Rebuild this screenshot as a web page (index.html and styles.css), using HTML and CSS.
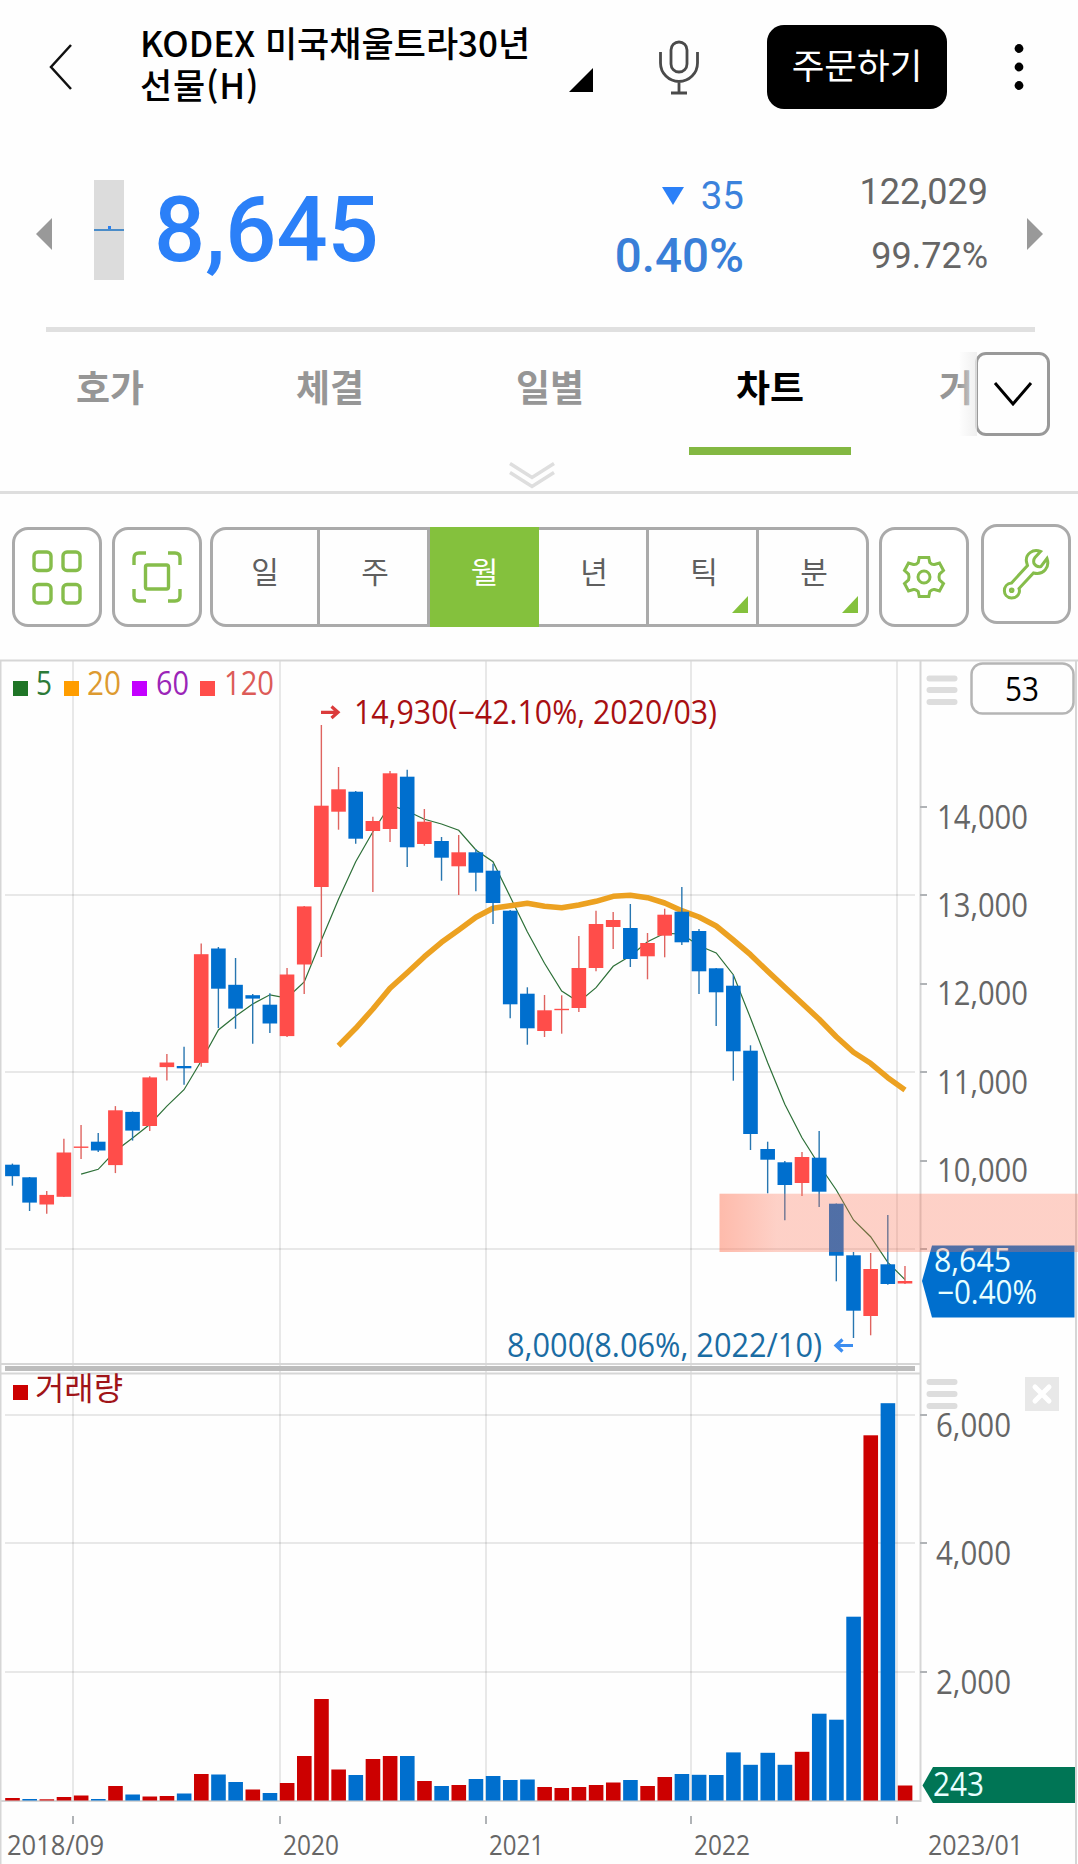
FILE: index.html
```html
<!DOCTYPE html>
<html lang="ko">
<head>
<meta charset="utf-8">
<title>KODEX 미국채울트라30년선물(H)</title>
<link rel="stylesheet" href="styles.css">
</head>
<body>
<header class="topbar">
  <svg class="back" width="24" height="48" viewBox="0 0 24 48"><path d="M22 2 2 24 22 46"/></svg>
  <h1 class="title">KODEX 미국채울트라30년<br><span class="second">선물(H)</span></h1>
  <svg class="picker" width="24" height="24" viewBox="0 0 24 24"><path d="M24 0V24H0Z"/></svg>
  <svg class="mic" width="42" height="56" viewBox="0 0 42 56"><rect x="13" y="2" width="16" height="30" rx="8"/><path d="M2.500 12V23a18.500 18.500 0 0 0 37 0V12M21 42V53M13 53H29"/></svg>
  <button class="order">주문하기</button>
  <svg class="more" width="10" height="48" viewBox="0 0 10 48"><circle cx="5" cy="5.500" r="4.400"/><circle cx="5" cy="24" r="4.400"/><circle cx="5" cy="42.500" r="4.400"/></svg>
</header>

<section class="quote">
  <svg class="prev" width="16" height="32" viewBox="0 0 16 32"><path d="M16 0V32L0 16Z"/></svg>
  <div class="range"><i></i></div>
  <div class="price">8,645</div>
  <div class="change">
    <div class="diff"><svg width="22" height="18" viewBox="0 0 22 18"><path d="M0 0H22L11 18Z"/></svg><span>35</span></div>
    <div class="rate">0.40%</div>
  </div>
  <div class="volume"><div>122,029</div><div>99.72%</div></div>
  <svg class="next" width="16" height="32" viewBox="0 0 16 32"><path d="M0 0V32L16 16Z"/></svg>
</section>

<nav class="tabs">
  <a>호가</a><a>체결</a><a>일별</a><a class="on">차트</a><a class="cut">거</a>
  <button class="expand"><svg width="40" height="26" viewBox="0 0 40 26"><path d="M2 2 20 23 38 2"/></svg></button>
</nav>
<div class="pull"><svg width="46" height="27" viewBox="0 0 46 27"><path d="M1 1.500 23 15.500 45 1.500M1 10.500 23 24.500 45 10.500"/></svg></div>

<section class="tools">
  <button class="tool"><svg width="50" height="55" viewBox="0 0 50 55"><rect x="2" y="2" width="17" height="18.500" rx="4"/><rect x="31" y="2" width="17" height="18.500" rx="4"/><rect x="2" y="34.500" width="17" height="18.500" rx="4"/><rect x="31" y="34.500" width="17" height="18.500" rx="4"/></svg></button>
  <button class="tool focus"><svg width="50" height="52" viewBox="0 0 50 52"><path d="M2 14V7Q2 2 7 2H14M36 2H43Q48 2 48 7V14M48 38V45Q48 50 43 50H36M14 50H7Q2 50 2 45V38"/><rect x="13.500" y="14" width="23" height="24" rx="2"/></svg></button>
  <div class="periods">
    <button>일</button><button>주</button><button class="on">월</button><button>년</button><button class="sub">틱</button><button class="sub">분</button>
  </div>
  <button class="tool gear"><svg width="44" height="44" viewBox="-22 -22 44 44"><path d="M-4.800 -19.500H4.800L5.800 -14.500Q8 -12 10.500 -12.500L15.500 -14 19.500 -6.500 15.500 -3Q14.500 0 15.500 3L19.500 6.500 15.500 14 10.500 12.500Q8 12 5.800 14.500L4.800 19.500H-4.800L-5.800 14.500Q-8 12-10.500 12.500L-15.500 14-19.500 6.500-15.500 3Q-14.500 0-15.500 -3L-19.500 -6.500-15.500 -14-10.500 -12.500Q-8 -12-5.800 -14.500Z"/><circle r="6"/></svg></button>
  <button class="tool wrench"><svg width="48" height="54" viewBox="0 0 48 54"><path d="M38.500 4.500C31 1.500 23 7 24.500 15L25.500 18.500 9.500 36C0 37 0 50.500 9.500 51 16 51 18.500 45.500 17 41.500L31.500 26C41.500 28.500 48 20.500 45 11.500L39 19.500Q34.500 20.500 32 16.500 31 13 33 10.500Z"/><circle cx="9.700" cy="43.300" r="1.300"/></svg></button>
</section>

<svg class="chart" id="chart" width="1078" height="1209" viewBox="0 655 1078 1209">
  <defs>
    <linearGradient id="zone"><stop offset="0" stop-color="#ff7859" stop-opacity=".5"/><stop offset=".16" stop-color="#fc7052" stop-opacity=".32"/><stop offset="1" stop-color="#fc7052" stop-opacity=".32"/></linearGradient>
  </defs>
  <g class="grid">
    <path d="M73 661V1801M280 661V1801M486 661V1801M691 661V1801M897 661V1801"/>
    <path d="M5 895H915M5 1072H915M5 1249H915M5 1415H915M5 1543H915M5 1672H915"/>
  </g>
  <g class="frame">
    <path d="M0 660.500H1078M0.500 660V1864M0 1364H920M0 1373.500H920"/>
    <path d="M920.500 660V1802M1076 660V1864M0 1801H920"/>
  </g>
  <path class="splitter" d="M5 1368.500H915"/>
  <path class="ticks" d="M920 807H927M920 895H927M920 984H927M920 1072H927M920 1161H927M920 1249H927M920 1415H927M920 1543H927M920 1672H927M73 1816V1824M280 1816V1824M486 1816V1824M691 1816V1824M897 1816V1824"/>
  <path id="ma5" class="ma5"/>
  <path id="ma20" class="ma20"/>
  <g id="candles"></g>
  <g id="volumes"></g>

  <g class="legend">
    <rect x="13" y="681" width="15" height="15" fill="#1f7526"/><text x="36" y="695" textLength="16" fill="#2c7a38">5</text>
    <rect x="64" y="681" width="15" height="15" fill="#ff9d00"/><text x="87" y="695" textLength="34" fill="#dd9a30">20</text>
    <rect x="132" y="681" width="15" height="15" fill="#c300ff"/><text x="156" y="695" textLength="33" fill="#9b25b8">60</text>
    <rect x="200" y="681" width="15" height="15" fill="#ff4d4a"/><text x="224" y="695" textLength="50" fill="#dc5b58">120</text>
    <rect x="13" y="1385" width="15" height="15" fill="#c00"/><text class="ko" x="35" y="1400" textLength="88" fill="#a01418">거래량</text>
  </g>
  <path class="arrow" stroke="#db3b3b" d="M321 712.300H338M331.500 706.500 338 712.300 331.500 718"/>
  <text x="354" y="724" textLength="363" fill="#a80f12">14,930(−42.10%, 2020/03)</text>
  <path class="arrow" stroke="#3b8df0" d="M853 1345.500H836M842.500 1339.500 836 1345.500 842.500 1351.500"/>
  <text x="507" y="1356.500" textLength="315" fill="#1a6ca3">8,000(8.06%, 2022/10)</text>

  <g class="axis">
    <text x="937" y="828.500" textLength="91">14,000</text>
    <text x="937" y="916.500" textLength="91">13,000</text>
    <text x="937" y="1005" textLength="91">12,000</text>
    <text x="937" y="1093.500" textLength="91">11,000</text>
    <text x="937" y="1182" textLength="91">10,000</text>
    <text x="936" y="1436.500" textLength="75">6,000</text>
    <text x="936" y="1564.500" textLength="75">4,000</text>
    <text x="936" y="1693.500" textLength="75">2,000</text>
  </g>
  <g class="axis dates">
    <text x="7" y="1855" textLength="97">2018/09</text>
    <text x="283" y="1855" textLength="56">2020</text>
    <text x="489" y="1855" textLength="55">2021</text>
    <text x="694" y="1855" textLength="56">2022</text>
    <text x="928" y="1855" textLength="95">2023/01</text>
  </g>
  <path class="menu" d="M929.500 678.500H954.500M929.500 690H954.500M929.500 702H954.500M929.500 1382H954.500M929.500 1394H954.500M929.500 1406H954.500"/>
  <rect class="count" x="971.500" y="663.500" width="102" height="50" rx="11"/>
  <text x="1005" y="700.500" textLength="34" fill="#000">53</text>
  <rect x="1025" y="1377" width="34" height="34" fill="#e8e8e8"/>
  <path class="close" d="M1035 1387 1049 1401M1049 1387 1035 1401"/>

  <path d="M922 1281 932 1245.500H1074.500V1317.500H932Z" fill="#006fce"/>
  <text class="tag" x="934" y="1272" textLength="77">8,645</text>
  <text class="tag" x="937" y="1303.500" textLength="100">−0.40%</text>
  <path d="M922.500 1785.500 933 1767H1075V1803H933Z" fill="#007555"/>
  <text class="tag" x="933" y="1796" textLength="51">243</text>
  <rect x="719.500" y="1193.700" width="358.500" height="58.300" fill="url(#zone)"/>
</svg>
<script src="chart.js"></script>
</body>
</html>
```
FILE: styles.css
```css
* { box-sizing: border-box; }
body {
  margin: 0;
  width: 1078px;
  height: 1864px;
  overflow: hidden;
  background: #fefefe;
  font-family: Roboto, "Noto Sans CJK KR", sans-serif;
  color: #000;
}
button { padding: 0; border: 0; background: none; font: inherit; color: inherit; }
svg { display: block; flex: none; }

.topbar { display: flex; height: 134px; padding-left: 49px; }
.back { margin-top: 43px; fill: none; stroke: #111; stroke-width: 2.5; }
.title {
  width: 420px;
  margin: 21px 0 0 67px;
  font: 500 35px/42px "Noto Sans CJK KR", sans-serif;
  white-space: nowrap;
}
.second { letter-spacing: .8px; }
.picker { margin: 68px 0 0 9px; }
.mic { margin: 40px 0 0 65px; fill: none; stroke: #4a4a4a; stroke-width: 2.8; }
.order {
  width: 180px;
  height: 84px;
  margin: 25px 0 0 67px;
  padding-bottom: 8px;
  border-radius: 17px;
  background: #000;
  color: #fff;
  font: 400 35.5px "Noto Sans CJK KR", sans-serif;
}
.more { margin: 43px 0 0 67px; }

.quote {
  display: flex;
  height: 198px;
  margin: 0 43px 0 46px;
  border-bottom: 5px solid #e0e0e0;
  font-size: 36px;
  color: #666;
}
.quote > * { flex: none; }
.prev, .next { margin-top: 84px; fill: #999; }
.prev { margin-left: -10px; }
.range { width: 30px; height: 100px; margin: 46px 0 0 42px; padding-top: 46px; background: #dcdcdc; }
.range i { display: block; height: 5px; border-bottom: 2px solid #4b8cc8; background: linear-gradient(#2b80f0, #2b80f0) 50% 0 / 3px 5px no-repeat; }
.price { width: 300px; margin: 42px 0 0 30px; font-size: 90px; line-height: 110px; font-weight: 500; color: #2b80f8; }
.change { width: 290px; margin-top: 39px; text-align: right; color: #397fd8; }
.diff { display: flex; justify-content: flex-end; align-items: center; gap: 17px; font-size: 38.5px; line-height: 46px; color: #3b82dc; }
.diff svg { fill: #2b80f8; }
.rate { margin-top: 9px; font-size: 47.5px; line-height: 56px; font-weight: 500; }
.volume { width: 244px; margin-top: 36px; text-align: right; line-height: 44px; }
.volume div + div { margin-top: 20px; }
.next { margin-left: 39px; }

.tabs { display: flex; position: relative; height: 123px; font: 700 37px/55px "Noto Sans CJK KR", sans-serif; color: #969696; }
.tabs a { width: 220px; height: 123px; padding-top: 27px; text-align: center; }
.tabs .on { padding-inline: 29px; color: #000; background: linear-gradient(#83b842, #83b842) 50% 115px / 162px 8px no-repeat; }
.tabs .cut { width: 95px; padding-left: 59px; text-align: left; }
.expand {
  position: absolute;
  left: 975px;
  top: 20px;
  display: grid;
  place-items: center;
  width: 75px;
  height: 84px;
  border: 3px solid #999;
  border-radius: 11px;
  background: #fefefe;
}
.expand::before { content: ""; position: absolute; right: 70px; top: -3px; width: 18px; height: 84px; background: linear-gradient(90deg, #fff0, #ecececcc); }
.expand svg { fill: none; stroke: #000; stroke-width: 3; }

.pull { display: flex; justify-content: center; height: 39px; padding: 7px 14px 0 0; border-bottom: 3px solid #dedede; }
.pull svg { fill: none; stroke: #dedede; stroke-width: 3.5; }

.tools { display: flex; align-items: flex-start; height: 161px; padding: 33px 0 0 12px; }
.tool {
  display: grid;
  place-items: center;
  width: 90px;
  height: 100px;
  border: 3px solid #aaa;
  border-radius: 16px;
  background: #fff;
}
.tool svg { fill: none; stroke: #86bd4b; stroke-width: 3.4; }
.focus { margin-left: 10px; }
.gear { margin-left: 10px; }
.wrench { margin: -3px 0 0 12px; }
.tool.wrench svg, .tool.gear svg { stroke-width: 3; }
.periods { display: grid; grid-template-columns: 107px 110px 109px 110px 110px 1fr; width: 659px; height: 100px; margin-left: 8px; border: 3px solid #aaa; border-radius: 16px; }
.periods button { position: relative; padding: 0 0 14px 3px; border-right: 3px solid #aaa; font: 400 30px "Noto Sans CJK KR", sans-serif; color: #5f5f5f; }
.periods button:first-child { padding-left: 0; }
.periods button:last-child { border: 0; }
.periods .on { margin: -3px 0; border-color: #84c13d; background: #84c13d; color: #fff; }
.sub::after { content: ""; position: absolute; right: 8px; bottom: 11px; border: solid transparent; border-width: 0 0 17px 16px; border-bottom-color: #84c13d; }

.chart text { font-family: "Open Sans", "Noto Sans", sans-serif; font-size: 32px; }
.chart .ko { font-family: "Noto Sans CJK KR", sans-serif; }
.chart .axis text { fill: #666; }
.chart .dates text { font-size: 27px; }
.chart .tag { fill: #e8ffff; }
.grid path { fill: none; stroke: #000; stroke-opacity: .085; stroke-width: 2; }
.frame path { fill: none; stroke: #d6d6d6; stroke-width: 2; }
.splitter { stroke: #bdbdbd; stroke-width: 5; }
.ticks { stroke: #b0b3b6; stroke-width: 2; }
.ma5 { fill: none; stroke: #2d7038; stroke-width: 1.2; }
.ma20 { fill: none; stroke: #eca121; stroke-width: 5.5; stroke-linejoin: round; }
.arrow { fill: none; stroke-width: 3.2; }
.menu { fill: none; stroke: #ddd; stroke-width: 6; stroke-linecap: round; }
.count { fill: #fefefe; stroke: #b5b5b5; stroke-width: 2.5; }
.close { stroke: #fff; stroke-width: 5; stroke-linecap: round; }
.up { fill: #ff4d4a; stroke: none; }
.down { fill: #006fce; stroke: none; }
.wick-up { stroke: #df6460; stroke-width: 1.4; }
.wick-down { stroke: #2876b0; stroke-width: 1.4; }
.vol-up { fill: #c00; }
.vol-down { fill: #006fce; }
```
FILE: chart.js
```js
// Monthly candles: direction, body top, body bottom, wick top, wick bottom.
const candles = `D 1164.7 1176.2 1163.6 1185.7
D 1177.3 1202.6 1177 1211
U 1194.9 1204.5 1191.1 1213.7
U 1152.5 1196.8 1138.7 1197
U 1146.5 1147.9 1124.9 1159
D 1141.7 1150.5 1132.9 1152
U 1110.3 1165.1 1106.1 1173.1
D 1111.9 1130.6 1111.5 1140.6
U 1077.4 1126 1076.3 1131
U 1062.5 1067.1 1054.1 1080.5
D 1066 1068.3 1046.8 1084.7
U 954.2 1062.9 943.5 1066.7
D 948.5 988.7 947 1028.1
D 984.8 1008.6 958 1028.8
D 995.2 998.6 994 1043.8
D 1004.7 1023.5 993.2 1033
U 974.5 1036.1 968 1037
U 906.4 964.5 906 994
U 805.7 887 725 957
U 789.3 811.7 767 829.7
D 791.7 838.7 791 843.7
U 821 831 816.7 892
U 773.3 829 771 842
D 776.7 847.3 769.7 867
U 821.7 844 809 845.7
D 841 857.7 837 880.7
U 852.3 866.3 835 895
D 852.3 872.7 849 891.3
D 870.7 903 863.7 924
D 910.7 1004.3 910 1018.3
D 993.7 1028.3 987.3 1044.7
U 1010.3 1031 995 1037
U 1008.8 1010.2 995.3 1033.7
U 968 1008 936 1012
U 924 968 910.7 971.3
U 920 927 912 949
D 928 959 904 967
U 943 956.3 933 979.3
U 914.7 935.7 908.7 957.3
D 911.7 942.3 887 945
D 931 971.3 929 994
D 968.3 992.3 968 1026
D 985.7 1051.3 975 1080.7
D 1050.7 1134 1045.3 1150
D 1149 1159.7 1141.7 1193.3
D 1162.3 1185 1161 1220.3
U 1157 1183 1152 1196
D 1157.7 1191.7 1131 1207
D 1203.7 1255.7 1203.5 1281.3
D 1255.3 1310.7 1252 1338
U 1269 1316 1253 1335.3
D 1264.3 1284 1215 1284.7
U 1281 1283.5 1266 1284`.split("\n").map(r => r.split(" "));

const volumes = `R1798 B1799 R1799.3 R1797 R1795.5 B1799 R1786 B1794.5 R1796.5 R1796 B1793.5 R1774 B1774.5 B1782 R1789.5 B1793 R1783 R1756 R1699 R1769.5 B1775 R1759 R1756 B1756 R1781 B1786 R1785 B1779 B1776 B1780 B1779.5 R1787 R1788 R1787 R1785 R1782.5 B1780 R1786 R1777 B1774 B1774.8 B1775 B1752.4 B1764.8 B1752.8 B1764.8 R1751.8 B1713.7 B1719.7 B1616.7 R1435.3 B1403.2 R1785.5`.split(" ");

const ma5 = [1174.2, 1169.3, 1151, 1137.9, 1124.5, 1106.1, 1089.7, 1061, 1030, 1016.2, 1004, 994.8, 998, 982, 940, 899.3, 861.7, 831.7, 805, 811, 819.3, 824, 830.3, 850, 861.7, 896.7, 931.7, 963.3, 991, 1002, 987.7, 966.3, 956, 941.7, 933.3, 934, 945.7, 953, 974.7, 1018, 1062.7, 1104.3, 1137.7, 1165, 1190, 1220, 1236.7, 1262.3, 1279.7];
const ma20 = [1045.7, 1028.3, 1009, 988.3, 972.7, 956.7, 942.3, 930, 917.3, 908.3, 905.7, 903.3, 906.3, 907.7, 905, 901.3, 896.3, 895.3, 897.7, 903, 910.7, 917, 926, 940, 954.7, 971.3, 987.3, 1003.3, 1019.3, 1036.7, 1052.3, 1063.3, 1077.7, 1090];

const x = i => 12.4 + 17.165 * i;
// Each average ends on the latest candle.
const line = v => "M" + v.map((y, k) => `${x(53 - v.length + k).toFixed(1)} ${y}`).join("L");

document.getElementById("ma5").setAttribute("d", line(ma5));
document.getElementById("ma20").setAttribute("d", line(ma20));

document.getElementById("candles").innerHTML = candles.map(([dir, top, bottom, high, low], i) => {
  const kind = dir === "U" ? "up" : "down";
  return `<path class="wick-${kind}" d="M${x(i)} ${high}V${low}"/><rect class="${kind}" x="${x(i) - 7.3}" y="${top}" width="14.6" height="${bottom - top}"/>`;
}).join("");

document.getElementById("volumes").innerHTML = volumes.map((v, i) => {
  const top = +v.slice(1);
  return `<rect class="vol-${v[0] === "R" ? "up" : "down"}" x="${x(i) - 7.2}" y="${top}" width="14.6" height="${1800.5 - top}"/>`;
}).join("");

document.querySelectorAll("#chart text").forEach(t => t.setAttribute("lengthAdjust", "spacingAndGlyphs"));
```
